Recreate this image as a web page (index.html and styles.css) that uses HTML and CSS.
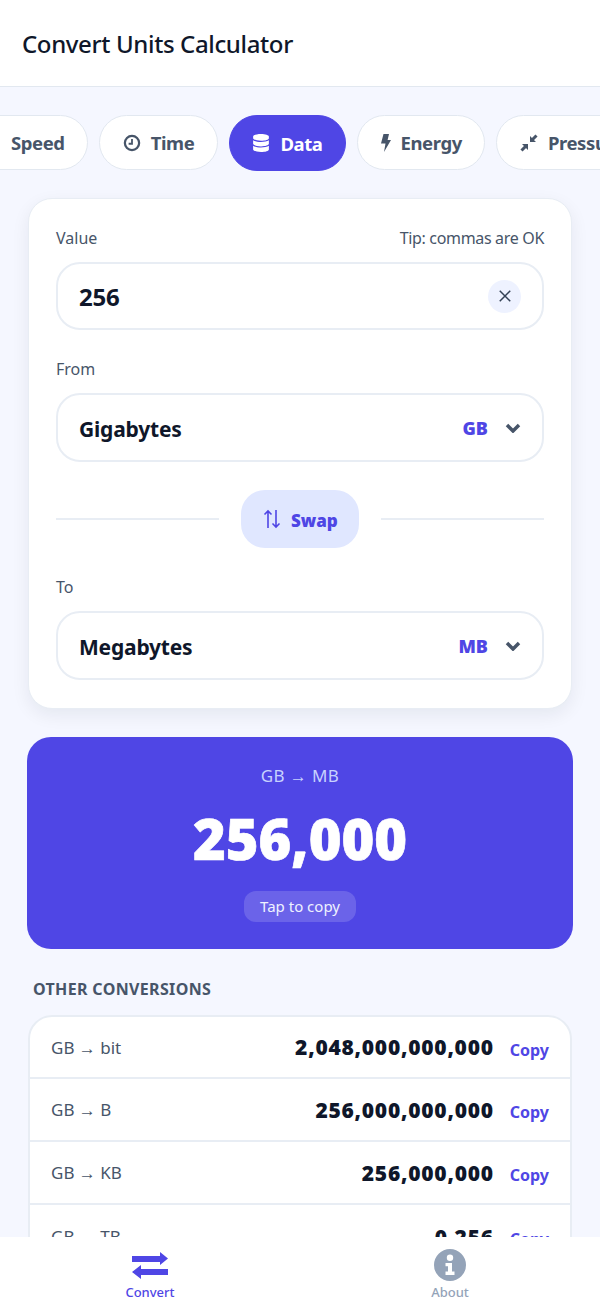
FILE: index.html
```html
<!DOCTYPE html>
<html lang="en">
<head>
    <meta charset="UTF-8">
    <meta name="viewport" content="width=device-width, initial-scale=1.0">
    <title>Convert Units Calculator</title>
    <link rel="stylesheet" href="styles.css">
</head>
<body>
    <header class="app-bar">
        <h1>Convert Units Calculator</h1>
    </header>

    <main class="content">
        <!-- Categories, scrolled to the selected one -->
        <nav class="chips">
            <div class="chip chip-first">Speed</div>
            <div class="chip">
                <svg class="chip-icon" viewBox="0 0 24 24"><circle cx="12" cy="12" r="9.5" fill="none" stroke="currentColor" stroke-width="3"/><path d="M12 6.500V13H7.500" fill="none" stroke="currentColor" stroke-width="2.400"/></svg>
                Time
            </div>
            <div class="chip active">
                <svg class="chip-icon" viewBox="0 0 448 512"><path fill="currentColor" d="M448 73.143v45.714C448 159.143 347.667 192 224 192S0 159.143 0 118.857V73.143C0 32.857 100.333 0 224 0s224 32.857 224 73.143zM448 176v102.857C448 319.143 347.667 352 224 352S0 319.143 0 278.857V176c48.125 33.143 136.208 48.572 224 48.572S399.874 209.143 448 176zm0 160v102.857C448 479.143 347.667 512 224 512S0 479.143 0 438.857V336c48.125 33.143 136.208 48.572 224 48.572S399.874 369.143 448 336z"/></svg>
                Data
            </div>
            <div class="chip">
                <svg class="chip-icon bolt" viewBox="0 0 10 18"><path fill="currentColor" d="M2.500 0H8L6.600 6H10L3 18l1.500-8.500H0z"/></svg>
                Energy
            </div>
            <div class="chip">
                <svg class="chip-icon" viewBox="0 0 18 18"><path fill="currentColor" d="M10 2v6h6zM8 16v-6H2z"/><path d="M11 7l5.500-5.500M7 11l-5.500 5.500" fill="none" stroke="currentColor" stroke-width="3"/></svg>
                Pressure
            </div>
        </nav>

        <section class="card">
            <div class="label-row">
                <span>Value</span>
                <span class="tip">Tip: commas are OK</span>
            </div>
            <div class="field value-field">
                <span class="field-value">256</span>
                <span class="clear-btn">
                    <svg viewBox="0 0 16 16"><path d="M2 2l12 12M14 2L2 14" fill="none" stroke="currentColor" stroke-width="1.700"/></svg>
                </span>
            </div>

            <div class="label-row from-label"><span>From</span></div>
            <div class="field">
                <span class="field-value">Gigabytes</span>
                <span class="unit">GB</span>
                <svg class="chevron" viewBox="0 0 16 10"><path d="M2 2l6 6 6-6" fill="none" stroke="currentColor" stroke-width="3.500"/></svg>
            </div>

            <div class="swap-row">
                <span class="divider"></span>
                <div class="swap-btn">
                    <svg viewBox="0 0 18 20"><path d="M5 19V2M1.500 5.500L5 2l3.500 3.500M13 1v17M9.500 14.500L13 18l3.500-3.500" fill="none" stroke="currentColor" stroke-width="1.600"/></svg>
                    <span class="swap-text">Swap</span>
                </div>
                <span class="divider"></span>
            </div>

            <div class="label-row"><span>To</span></div>
            <div class="field">
                <span class="field-value">Megabytes</span>
                <span class="unit">MB</span>
                <svg class="chevron" viewBox="0 0 16 10"><path d="M2 2l6 6 6-6" fill="none" stroke="currentColor" stroke-width="3.500"/></svg>
            </div>
        </section>

        <section class="result">
            <div class="result-pair">GB → MB</div>
            <div class="result-value">256,000</div>
            <div class="copy-pill">Tap to copy</div>
        </section>

        <h2 class="section-title">OTHER CONVERSIONS</h2>

        <section class="list">
            <div class="row">
                <span class="row-pair">GB → bit</span>
                <span class="row-value">2,048,000,000,000</span>
                <span class="row-copy">Copy</span>
            </div>
            <div class="row">
                <span class="row-pair">GB → B</span>
                <span class="row-value">256,000,000,000</span>
                <span class="row-copy">Copy</span>
            </div>
            <div class="row">
                <span class="row-pair">GB → KB</span>
                <span class="row-value">256,000,000</span>
                <span class="row-copy">Copy</span>
            </div>
            <div class="row">
                <span class="row-pair">GB → TB</span>
                <span class="row-value">0.256</span>
                <span class="row-copy">Copy</span>
            </div>
        </section>
    </main>

    <footer class="tabs">
        <div class="tab active">
            <svg class="tab-arrows" viewBox="0 0 36 27"><path fill="currentColor" d="M0 4h28V0l8 6.500-8 6.500V10H0zM36 17H9v-4l-9 7 9 7v-4h27z"/></svg>
            <span>Convert</span>
        </div>
        <div class="tab">
            <svg class="tab-info" viewBox="0 0 32 32"><path fill="currentColor" fill-rule="evenodd" d="M16 0a16 16 0 1 1 0 32a16 16 0 0 1 0-32zM16 5.500a3.200 3.200 0 1 0 0 6.400a3.200 3.200 0 0 0 0-6.400zM11.500 14v3.200h2.500v5.300h-2.500v3.500h9v-3.500h-2.500V14z"/></svg>
            <span>About</span>
        </div>
    </footer>
</body>
</html>
```

FILE: styles.css
```css
* {
    box-sizing: border-box;
}
html, body {
    margin: 0;
    height: 100%;
}
body {
    display: flex;
    flex-direction: column;
    height: 1304px;
    overflow: hidden;
    font-family: "Noto Sans", sans-serif;
    background-color: #f5f7ff;
    color: #0f172a;
}
.app-bar {
    height: 87px;
    flex-shrink: 0;
    display: flex;
    align-items: center;
    padding-left: 22px;
    background-color: #fff;
    border-bottom: 1px solid #e2e8f0;
}
.app-bar h1 {
    margin: 0;
    font-size: 24px;
    font-weight: 500;
    letter-spacing: -0.37px;
}
.content {
    flex: 1;
    overflow: hidden;
    padding: 28px 28px 0;
}
.chips {
    display: flex;
    gap: 11px;
    margin-left: -28px;
    margin-right: -28px;
    overflow: hidden;
    height: 56px;
}
.chip {
    display: flex;
    align-items: center;
    flex-shrink: 0;
    gap: 10px;
    height: 55px;
    padding: 0 22.5px;
    border: 1px solid #e2e8f0;
    border-radius: 28px;
    background-color: #fff;
    color: #475569;
    font-size: 18.5px;
    font-weight: 700;
    letter-spacing: -0.4px;
}
.chip-first {
    margin-left: -40px;
    padding-left: 50px;
}
.chip.active {
    height: 56px;
    background-color: #4f46e5;
    border-color: #4f46e5;
    color: #fff;
}
.chip-icon {
    width: 18px;
    height: 18px;
}
.chip-icon.bolt {
    width: 10px;
}
.card {
    margin-top: 27px;
    padding: 27px 27px 27px;
    height: 511px;
    background-color: #fff;
    border: 1px solid #e8edf4;
    border-radius: 24px;
    box-shadow: 0 6px 18px rgba(15, 23, 42, 0.07);
}
.label-row {
    display: flex;
    justify-content: space-between;
    align-items: center;
    height: 24px;
    margin-bottom: 12px;
    color: #475569;
    font-size: 16px;
}
.tip {
    letter-spacing: -0.33px;
}
.from-label {
    margin-top: 27px;
}
.field {
    display: flex;
    align-items: center;
    height: 69px;
    padding: 0 21px;
    border: 2px solid #e8edf4;
    border-radius: 24px;
    background-color: #fff;
}
.value-field {
    height: 68px;
}
.field-value {
    flex: 1;
    margin-top: 2px;
    font-size: 21px;
    font-weight: 700;
    letter-spacing: -0.2px;
}
.value-field .field-value {
    margin-top: 0;
    font-size: 24px;
}
.clear-btn {
    display: flex;
    align-items: center;
    justify-content: center;
    width: 33px;
    height: 33px;
    border-radius: 50%;
    background-color: #eef2ff;
    color: #334155;
}
.clear-btn svg {
    width: 14px;
    height: 14px;
}
.unit {
    margin-right: 17px;
    color: #4f46e5;
    font-size: 18px;
    font-weight: 900;
}
.chevron {
    width: 16px;
    height: 10px;
    color: #475569;
}
.swap-row {
    display: flex;
    align-items: center;
    gap: 22px;
    margin: 28px 0 27px;
}
.divider {
    flex: 1;
    height: 2px;
    background-color: #e8edf4;
}
.swap-btn {
    display: flex;
    align-items: center;
    gap: 10px;
    width: 118px;
    height: 58px;
    padding-left: 22px;
    border-radius: 24px;
    background-color: #e0e7ff;
    color: #4f46e5;
    font-size: 17px;
    font-weight: 900;
}
.swap-btn svg {
    width: 18px;
    height: 20px;
}
.swap-text {
    margin-top: 2px;
}
.result {
    display: flex;
    flex-direction: column;
    align-items: center;
    margin: 28px -1px 0;
    height: 212px;
    padding-top: 27px;
    border-radius: 24px;
    background-color: #4f46e5;
    color: #fff;
}
.result-pair {
    color: #c7d2fe;
    font-size: 17px;
    line-height: 24px;
    letter-spacing: 0.4px;
}
.result-value {
    margin-top: 12px;
    font-size: 56px;
    font-weight: 900;
    line-height: 76px;
    -webkit-text-stroke: 0.7px #fff;
}
.copy-pill {
    margin-top: 15px;
    padding: 0 16px;
    height: 31px;
    line-height: 31px;
    border-radius: 12px;
    background-color: rgba(255, 255, 255, 0.16);
    color: #eef2ff;
    font-size: 15px;
}
.section-title {
    margin: 29px 0 15px 5px;
    color: #475569;
    font-size: 16px;
    line-height: 22px;
    font-weight: 700;
    letter-spacing: 0.35px;
}
.list {
    background-color: #fff;
    border: 2px solid #e8edf4;
    border-radius: 24px;
    overflow: hidden;
}
.row {
    display: flex;
    align-items: center;
    height: 63px;
    padding: 0 21px;
    border-bottom: 2px solid #e8edf4;
}
.row:first-child {
    height: 62px;
}
.row:last-child {
    border-bottom: 0;
}
.row-pair {
    flex: 1;
    color: #475569;
    font-size: 17px;
}
.row-value {
    font-size: 21px;
    font-weight: 900;
    letter-spacing: 0.75px;
}
.row-copy {
    margin: 5px 0 0 16px;
    color: #4f46e5;
    font-size: 16px;
    font-weight: 700;
}
.tabs {
    flex-shrink: 0;
    display: flex;
    height: 67px;
    background-color: #fff;
}
.tab {
    flex: 1;
    display: flex;
    flex-direction: column;
    align-items: center;
    padding-top: 12px;
    color: #94a3b8;
    font-size: 13px;
    font-weight: 500;
}
.tab.active {
    color: #4f46e5;
}
.tab-arrows {
    width: 36px;
    height: 27px;
    margin: 3px 0 4px;
}
.tab-info {
    width: 32px;
    height: 32px;
    margin-bottom: 2px;
}
```
